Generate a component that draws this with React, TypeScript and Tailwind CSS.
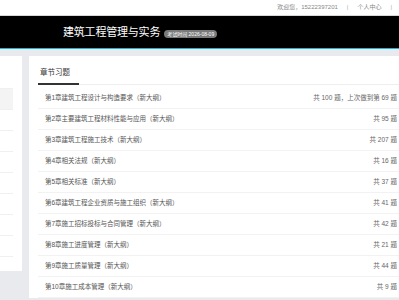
import React from 'react';

const chapters = [
  { name: '第1章建筑工程设计与构造要求（新大纲）', info: '共 100 题，上次做到第 69 题' },
  { name: '第2章主要建筑工程材料性能与应用（新大纲）', info: '共 95 题' },
  { name: '第3章建筑工程施工技术（新大纲）', info: '共 207 题' },
  { name: '第4章相关法规（新大纲）', info: '共 16 题' },
  { name: '第5章相关标准（新大纲）', info: '共 37 题' },
  { name: '第6章建筑工程企业资质与施工组织（新大纲）', info: '共 41 题' },
  { name: '第7章施工招标投标与合同管理（新大纲）', info: '共 42 题' },
  { name: '第8章施工进度管理（新大纲）', info: '共 21 题' },
  { name: '第9章施工质量管理（新大纲）', info: '共 44 题' },
  { name: '第10章施工成本管理（新大纲）', info: '共 9 题' },
];

export default function App() {
  return (
    <div
      className="w-[399px] h-[300px] overflow-hidden bg-[#e9eaee]"
      style={{ fontFamily: '"Liberation Sans", "Noto Sans CJK SC", sans-serif' }}
    >
      {/* top bar */}
      <div className="h-[16px] bg-white border-b border-[#d8d8d8] flex items-center justify-end pr-[7px] text-[6px] text-[#888]">
        <span>欢迎您，15222397201</span>
        <span className="mx-[9px] text-[#aaa]">|</span>
        <span className="mr-[9px]">个人中心</span>
        <span className="text-[#aaa]">|</span>
      </div>

      {/* header */}
      <div className="h-[33px] bg-black border-b border-[#1ab3d9] flex items-center pl-[63px]">
        <span className="text-[11px] text-white tracking-[-0.2px]">建筑工程管理与实务</span>
        <span className="ml-[4px] mt-[3px] h-[8px] px-[3px] rounded-full bg-[#7a7a7a] text-white text-[5px] leading-[8px] whitespace-nowrap">
          考试时间 2026-08-09
        </span>
      </div>

      {/* body */}
      <div className="flex gap-[7px] pt-[7px]">
        <div className="w-[22px] h-[215px] shrink-0 bg-white pr-[9px] pt-[12px]">
          {Array.from({ length: 9 }).map((_, i) => (
            <div
              key={i}
              className={`h-[21px] border-b border-[#f0f0f0] ${i === 1 ? 'bg-[#f4f4f4]' : ''}`}
            />
          ))}
        </div>

        <div className="w-[384px] shrink-0 bg-white px-[9px] pt-[7px]">
          <div className="h-[22px] border-b border-[#eeeeee] flex">
            <div className="w-[41px] h-[22px] border-b-2 border-[#333] flex items-center pl-[2px] text-[7.5px] text-[#333]">
              章节习题
            </div>
          </div>
          <div className="pt-[3px]">
            {chapters.map((c) => (
              <div
                key={c.name}
                className="h-[21px] border-b border-[#f2f2f2] flex items-center justify-between px-[7px] text-[6.5px] whitespace-nowrap"
              >
                <span className="text-[#555]">{c.name}</span>
                <span className="text-[#666]">{c.info}</span>
              </div>
            ))}
          </div>
        </div>
      </div>
    </div>
  );
}
